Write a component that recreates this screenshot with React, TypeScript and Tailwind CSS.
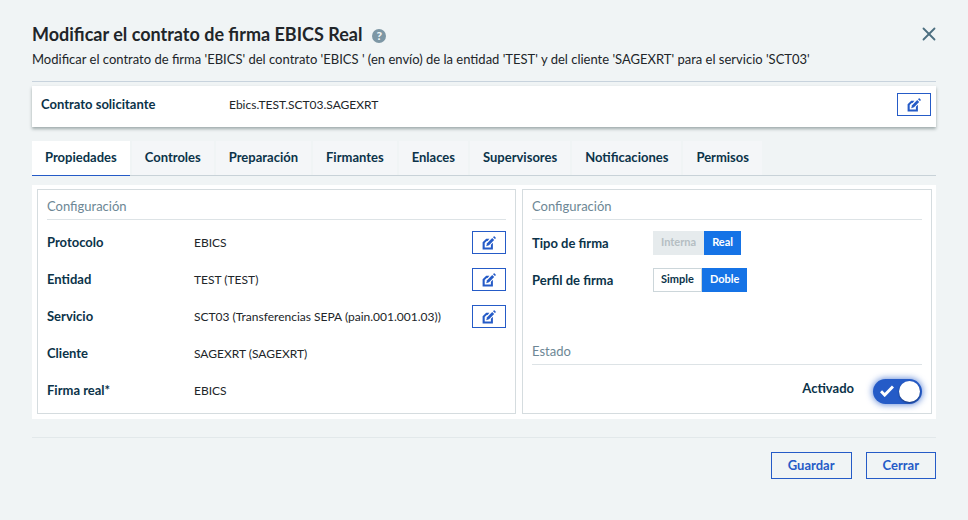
import { useState } from "react";
import { X } from "lucide-react";

const tabs = [
  "Propiedades",
  "Controles",
  "Preparación",
  "Firmantes",
  "Enlaces",
  "Supervisores",
  "Notificaciones",
  "Permisos",
];

const fields = [
  { label: "Protocolo", value: "EBICS", editable: true },
  { label: "Entidad", value: "TEST (TEST)", editable: true },
  { label: "Servicio", value: "SCT03 (Transferencias SEPA (pain.001.001.03))", editable: true },
  { label: "Cliente", value: "SAGEXRT (SAGEXRT)", editable: false },
  { label: "Firma real*", value: "EBICS", editable: false },
];

const EditButton = ({ label }: { label: string }) => (
  <button
    type="button"
    aria-label={`Editar ${label}`}
    className="flex h-[23px] w-[34px] shrink-0 items-center justify-center border border-[#255bc7] bg-white text-[#255bc7]"
  >
    <svg viewBox="0 0 14 14" className="h-3.5 w-3.5" fill="currentColor" aria-hidden="true">
      <path d="M4.2 2.8H7.4L5.6 4.9H4.8L2.7 7v4.5h6.2V8.8l2-2.1v6.7H.6V6.2z" />
      <path d="M10.2 1.9l2 2-5.2 5.3-2.8 1 .9-2.9z" />
      <path d="M11 1.2l.7-.7q.5-.4 1 0l.9.9q.4.5 0 1l-.7.7z" />
    </svg>
  </button>
);

const SectionTitle = ({ children }: { children: string }) => (
  <h2 className="h-[30px] border-b border-[#dde3e6] pt-1 text-[13px] leading-6 text-[#6d8795]">{children}</h2>
);

const Segmented = ({
  label,
  options,
  initial,
  disabled = [],
}: {
  label: string;
  options: string[];
  initial: string;
  disabled?: string[];
}) => {
  const [selected, setSelected] = useState(initial);

  return (
    <div className="flex h-[37px] items-center">
      <span className="w-[121px] shrink-0 text-[13px] leading-5 font-bold text-[#0b3349]">{label}</span>
      <div role="group" aria-label={label} className="flex text-[11px] font-bold">
        {options.map((option) => (
          <button
            key={option}
            type="button"
            disabled={disabled.includes(option)}
            aria-pressed={selected === option}
            onClick={() => setSelected(option)}
            className="h-6 border border-[#ccd6da] bg-white px-[7px] text-[#0b3349] disabled:border-[#e6ebed] disabled:bg-[#e6ebed] disabled:text-[#b5bec3] aria-pressed:border-[#1573e6] aria-pressed:bg-[#1573e6] aria-pressed:text-white"
          >
            {option}
          </button>
        ))}
      </div>
    </div>
  );
};

const App = () => {
  const [activeTab, setActiveTab] = useState("Propiedades");
  const [enabled, setEnabled] = useState(true);

  return (
    <main className="min-h-screen bg-[#f0f4f5] px-8 pt-5 font-['Lato',sans-serif]">
      <header className="border-b border-[#c8d3dd] pb-3">
        <div className="flex h-7 items-center justify-between">
          <div className="flex items-center gap-2.5">
            <h1 className="text-lg leading-7 font-bold text-[#212529]">
              Modificar el contrato de firma EBICS Real
            </h1>
            <button
              type="button"
              aria-label="Ayuda"
              className="mt-1 flex h-3.5 w-3.5 items-center justify-center rounded-full bg-[#7d97a5] text-xs leading-none font-black text-[#f0f4f5]"
            >
              ?
            </button>
          </div>
          <button type="button" aria-label="Cerrar ventana" className="-mr-1 text-[#4c6f80]">
            <X className="h-[22px] w-[22px]" strokeWidth={2} />
          </button>
        </div>
        <p className="mt-px text-[13px] leading-5 text-[#212529]">
          Modificar el contrato de firma 'EBICS' del contrato 'EBICS ' (en envío) de la entidad 'TEST' y del cliente
          'SAGEXRT' para el servicio 'SCT03'
        </p>
      </header>

      <section className="mt-1 flex h-[41px] items-center bg-white pr-[5px] pb-1 pl-[9px] shadow-[0_2px_3px_rgba(60,80,80,0.45)]">
        <span className="w-47 shrink-0 text-[13px] font-bold text-[#0b3349]">Contrato solicitante</span>
        <span className="flex-1 text-xs text-[#212529]">Ebics.TEST.SCT03.SAGEXRT</span>
        <EditButton label="Contrato solicitante" />
      </section>

      <div role="tablist" className="mt-3.5 flex gap-0.5 border-b border-[#c8d2d8]">
        {tabs.map((tab) => (
          <button
            key={tab}
            type="button"
            role="tab"
            aria-selected={activeTab === tab}
            onClick={() => setActiveTab(tab)}
            className="-mb-px h-[35px] border-b border-[#c8d2d8] bg-[#f4f6f8] px-[13px] text-[13px] font-bold text-[#0b3349] aria-selected:border-[#255bc7] aria-selected:bg-white"
          >
            {tab}
          </button>
        ))}
      </div>

      <div className="mt-[9px] grid grid-cols-[479fr_410fr] gap-1.5 bg-white pt-1 pr-1 pb-[5px] pl-[5px]">
        <section className="border border-[#d5dcdf] px-[9px] pb-1">
          <SectionTitle>Configuración</SectionTitle>
          <div className="pt-1">
            {fields.map((field) => (
              <div key={field.label} className="flex h-[37px] items-center">
                <span className="w-[147px] shrink-0 text-[13px] font-bold text-[#0b3349]">{field.label}</span>
                <span className="flex-1 text-xs text-[#212529]">{field.value}</span>
                {field.editable && <EditButton label={field.label} />}
              </div>
            ))}
          </div>
        </section>

        <section className="flex flex-col border border-[#d5dcdf] px-[9px]">
          <SectionTitle>Configuración</SectionTitle>
          <div className="flex-1 pt-1">
            <Segmented label="Tipo de firma" options={["Interna", "Real"]} initial="Real" disabled={["Interna"]} />
            <Segmented label="Perfil de firma" options={["Simple", "Doble"]} initial="Doble" />
          </div>
          <SectionTitle>Estado</SectionTitle>
          <label className="flex h-12 cursor-pointer items-center justify-end gap-[19px] pt-1 text-[13px] font-bold text-[#0b3349]">
            <span className="pb-1">Activado</span>
            <input
              type="checkbox"
              role="switch"
              checked={enabled}
              onChange={(e) => setEnabled(e.target.checked)}
              className="peer sr-only"
            />
            <span className="flex h-[25px] w-[49px] flex-row-reverse items-center justify-between rounded-full bg-[#9fb0ba] pr-0.5 pl-[7px] shadow-[0_0_6px_1px_rgba(37,91,199,0.65)] peer-checked:flex-row peer-checked:bg-[#255bc7]">
              <svg viewBox="0 0 14 12" className="h-3 w-3.5 text-white" fill="none" aria-hidden="true">
                <path d="M1 6.2l3.7 3.8L13 1.5" stroke="currentColor" strokeWidth="3" />
              </svg>
              <span className="h-[21px] w-[21px] rounded-full bg-white shadow-[0_1px_2px_rgba(0,0,0,0.4)]" />
            </span>
          </label>
        </section>
      </div>

      <footer className="mt-[18px] flex justify-end gap-3.5 border-t border-[#e2e8ea] py-3.5">
        <button type="button" className="h-[27px] border border-[#255bc7] px-4 text-[13px] font-bold text-[#255bc7]">
          Guardar
        </button>
        <button type="button" className="h-[27px] border border-[#255bc7] px-4 text-[13px] font-bold text-[#255bc7]">
          Cerrar
        </button>
      </footer>
    </main>
  );
};

export default App;
